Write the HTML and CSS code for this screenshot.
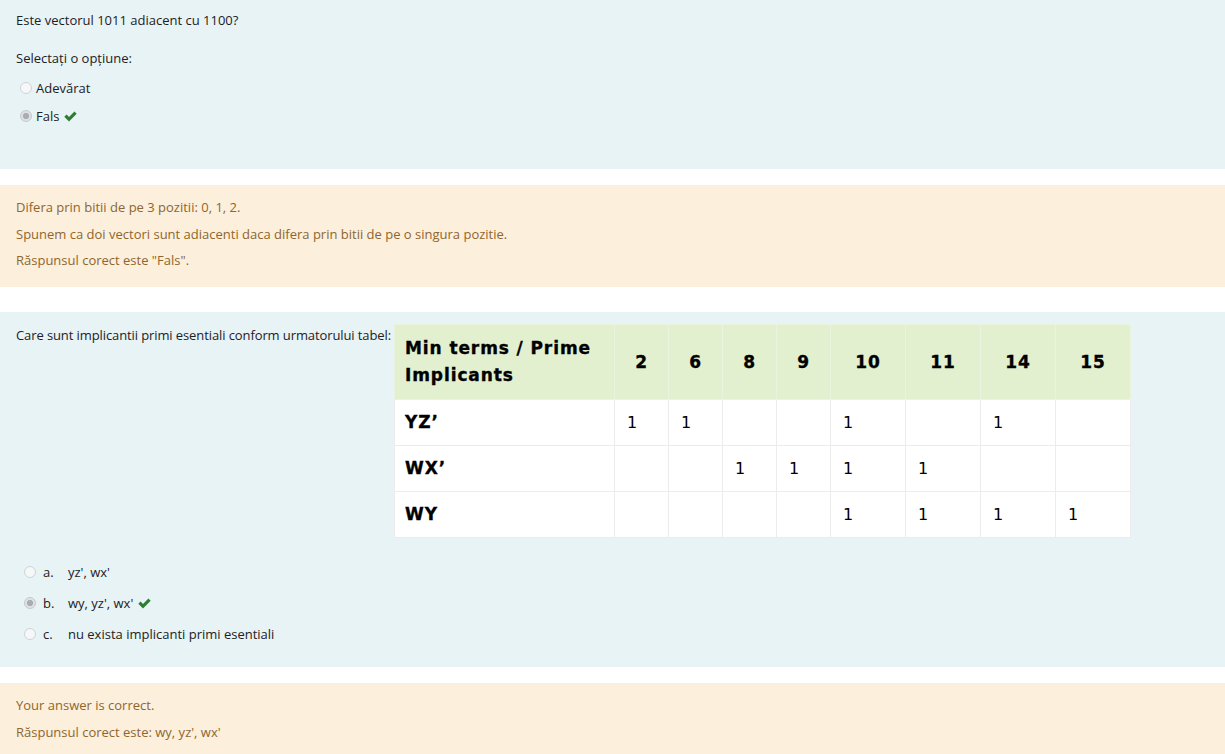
FILE: index.html
```html
<!DOCTYPE html>
<html lang="ro">
<head>
<meta charset="utf-8">
<title>Quiz review</title>
<link rel="stylesheet" href="styles.css">
</head>
<body>
<section class="formulation q1">
  <p class="qtext">Este vectorul 1011 adiacent cu 1100?</p>
  <p class="prompt">Selectați o opțiune:</p>
  <div class="answers">
    <div class="opt"><span class="radio"></span><span class="lbl">Adevărat</span></div>
    <div class="opt"><span class="radio checked"></span><span class="lbl">Fals</span><svg class="check" viewBox="0 0 16 16" aria-hidden="true"><path d="M1.4 8.3 L3.8 5.9 L6.4 8.5 L12.2 2.7 L14.6 5.1 L6.4 13.3 Z"/></svg></div>
  </div>
</section>

<section class="feedback fb1">
  <p>Difera prin bitii de pe 3 pozitii: 0, 1, 2.</p>
  <p>Spunem ca doi vectori sunt adiacenti daca difera prin bitii de pe o singura pozitie.</p>
  <p>Răspunsul corect este "Fals".</p>
</section>

<section class="formulation q2">
  <div class="qrow">
    <p class="qtext">Care sunt implicantii primi esentiali conform urmatorului tabel:</p>
    <table class="pi">
      <thead>
        <tr>
          <th class="c-first">Min terms / Prime Implicants</th>
          <th class="c-n">2</th><th class="c-n">6</th><th class="c-n">8</th><th class="c-n">9</th>
          <th class="c-w">10</th><th class="c-w">11</th><th class="c-w">14</th><th class="c-w">15</th>
        </tr>
      </thead>
      <tbody>
        <tr><th>YZ’</th><td>1</td><td>1</td><td></td><td></td><td>1</td><td></td><td>1</td><td></td></tr>
        <tr><th>WX’</th><td></td><td></td><td>1</td><td>1</td><td>1</td><td>1</td><td></td><td></td></tr>
        <tr><th>WY</th><td></td><td></td><td></td><td></td><td>1</td><td>1</td><td>1</td><td>1</td></tr>
      </tbody>
    </table>
  </div>
  <div class="answers mc">
    <div class="opt"><span class="radio"></span><span class="num">a.</span><span class="lbl">yz', wx'</span></div>
    <div class="opt"><span class="radio checked"></span><span class="num">b.</span><span class="lbl">wy, yz', wx'</span><svg class="check" viewBox="0 0 16 16" aria-hidden="true"><path d="M1.4 8.3 L3.8 5.9 L6.4 8.5 L12.2 2.7 L14.6 5.1 L6.4 13.3 Z"/></svg></div>
    <div class="opt"><span class="radio"></span><span class="num">c.</span><span class="lbl">nu exista implicanti primi esentiali</span></div>
  </div>
</section>

<section class="feedback fb2">
  <p>Your answer is correct.</p>
  <p>Răspunsul corect este: wy, yz', wx'</p>
</section>
</body>
</html>
```

FILE: styles.css
```css
html, body {
  margin: 0;
  padding: 0;
  background: #ffffff;
}
body {
  font-family: "Open Sans", "Noto Sans", sans-serif;
  font-size: 13px;
  line-height: 20px;
  color: #1d2125;
}
p {
  margin: 0;
}

.formulation {
  background: #e7f3f5;
  padding: 10px 16px 0 16px;
}
.q1 {
  height: 159px;
  margin-bottom: 16px;
}
.q1 .prompt {
  margin-top: 18px;
}
.q1 .answers {
  margin-top: 10px;
  padding-left: 4px;
}

.answers .opt {
  display: flex;
  align-items: center;
  height: 20px;
  margin-bottom: 8px;
}
.radio {
  width: 12px;
  height: 12px;
  border-radius: 50%;
  border: 1px solid #cfd3d6;
  background: #f6f7f8;
  box-sizing: border-box;
  margin-right: 4px;
  flex: none;
}
.radio.checked {
  background: radial-gradient(circle, #a9adb0 0 2.8px, #dfe2e4 3.4px);
  border-color: #c4c8cb;
}
.check {
  width: 15px;
  height: 15px;
  margin-left: 4px;
  fill: #2f7d32;
  flex: none;
}

.feedback {
  background: #fcefdc;
  color: #8e662e;
  padding: 12px 16px 0 16px;
}
.feedback p {
  margin-bottom: 6.5px;
}
.fb1 {
  height: 90px;
  margin-bottom: 25px;
}
.fb2 {
  height: 80px;
}

.q2 {
  padding-top: 12px;
  height: 343px;
  margin-bottom: 16px;
}
.qrow {
  display: flex;
  align-items: flex-start;
  gap: 3px;
}
.q2 .qtext {
  padding-top: 1px;
  white-space: nowrap;
  letter-spacing: -0.1px;
  flex: none;
}

.pi {
  border-collapse: collapse;
  table-layout: fixed;
  font-family: "DejaVu Sans", Verdana, sans-serif;
  color: #000;
  background: #ffffff;
  flex: none;
}
.pi th, .pi td {
  box-sizing: border-box;
  border: 1px solid #ececec;
  padding: 10px 10px;
  text-align: left;
  vertical-align: middle;
  font-size: 16px;
}
.pi thead th {
  background: #e2f0d0;
  border-color: #eaf3de;
  font-size: 17px;
  letter-spacing: 0.9px;
  -webkit-text-stroke: 0.35px #000;
  line-height: 27px;
  font-weight: bold;
  text-align: center;
  height: 74px;
}
.pi thead th.c-first {
  text-align: left;
}
.pi tbody th {
  font-weight: bold;
  font-size: 17px;
  letter-spacing: 0.9px;
  -webkit-text-stroke: 0.35px #000;
  line-height: 25px;
}
.pi tbody td {
  line-height: 25px;
  padding-left: 12px;
}
.c-first { width: 220px; }
.c-n { width: 54px; }
.c-w { width: 75px; }

.mc {
  margin-top: 24px;
  padding-left: 8px;
}
.mc .radio {
  margin-right: 6px;
}
.mc .opt {
  margin-bottom: 11px;
}
.mc .num {
  width: 25px;
  margin-left: 1px;
}
```
